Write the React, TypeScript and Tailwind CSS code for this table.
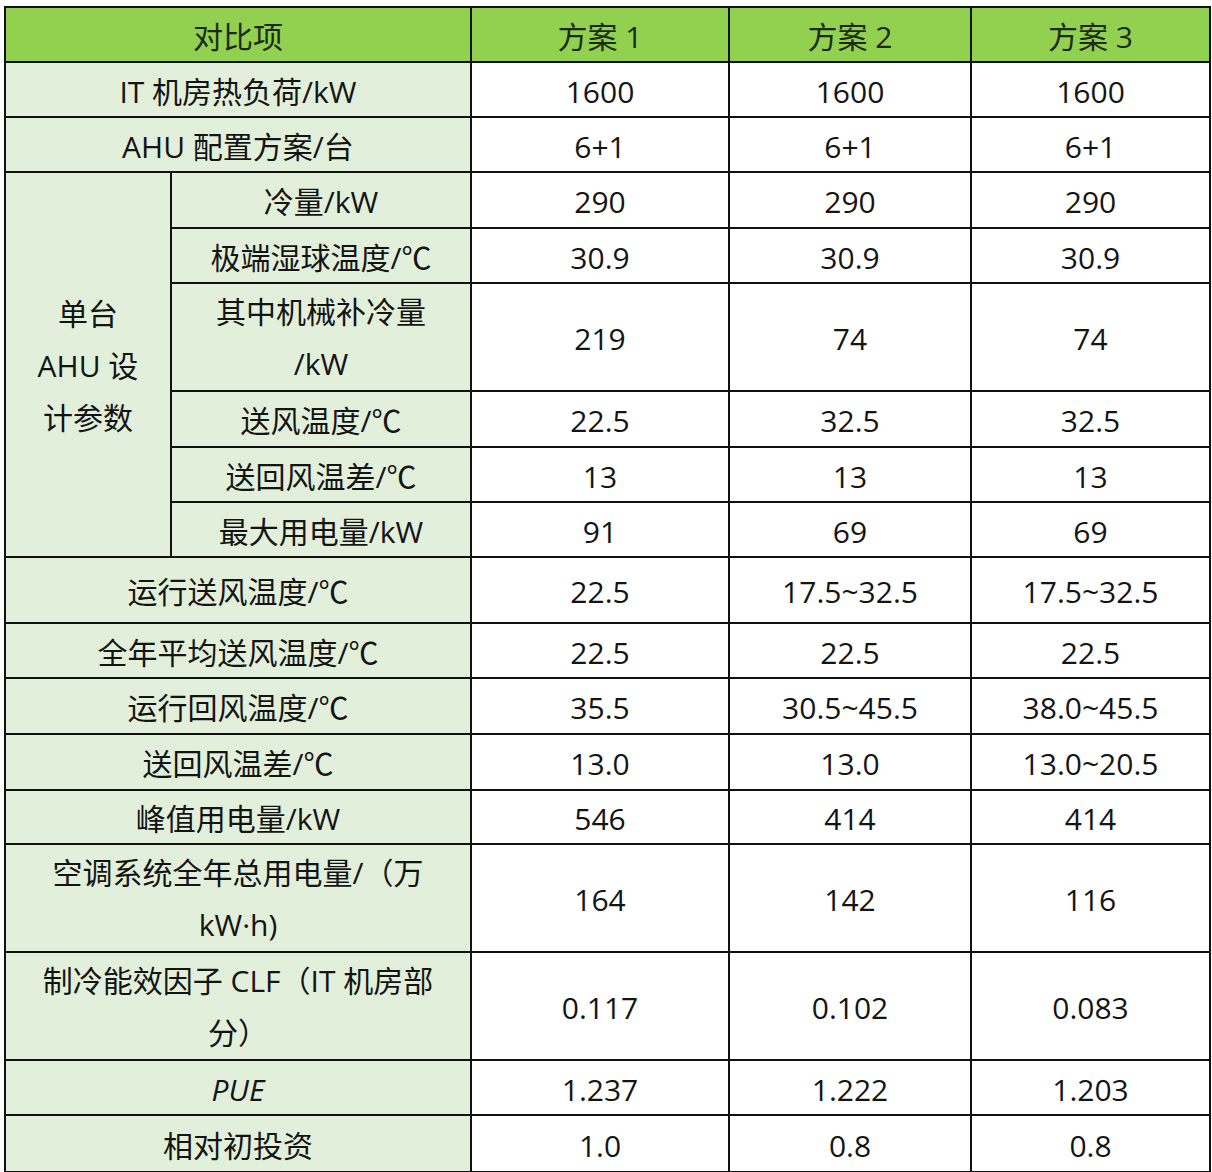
import React from "react";

const font = {
  fontFamily: '"Open Sans", "Noto Sans CJK SC", sans-serif',
};

type Row = {
  label: React.ReactNode;
  values: string[];
  h: string;
  italic?: boolean;
  multi?: boolean;
};

const topRows: Row[] = [
  { label: "IT 机房热负荷/kW", values: ["1600", "1600", "1600"], h: "h-[55px]" },
  { label: "AHU 配置方案/台", values: ["6+1", "6+1", "6+1"], h: "h-[55px]" },
];

const subRows: Row[] = [
  { label: "冷量/kW", values: ["290", "290", "290"], h: "h-[56px]" },
  { label: "极端湿球温度/℃", values: ["30.9", "30.9", "30.9"], h: "h-[55px]" },
  {
    label: (
      <>
        其中机械补冷量
        <br />
        /kW
      </>
    ),
    values: ["219", "74", "74"],
    h: "h-[107px]",
    multi: true,
  },
  { label: "送风温度/℃", values: ["22.5", "32.5", "32.5"], h: "h-[56px]" },
  { label: "送回风温差/℃", values: ["13", "13", "13"], h: "h-[55px]" },
  { label: "最大用电量/kW", values: ["91", "69", "69"], h: "h-[55px]" },
];

const bottomRows: Row[] = [
  { label: "运行送风温度/℃", values: ["22.5", "17.5~32.5", "17.5~32.5"], h: "h-[66px]" },
  { label: "全年平均送风温度/℃", values: ["22.5", "22.5", "22.5"], h: "h-[55px]" },
  { label: "运行回风温度/℃", values: ["35.5", "30.5~45.5", "38.0~45.5"], h: "h-[56px]" },
  { label: "送回风温差/℃", values: ["13.0", "13.0", "13.0~20.5"], h: "h-[56px]" },
  { label: "峰值用电量/kW", values: ["546", "414", "414"], h: "h-[54px]" },
  {
    label: (
      <>
        空调系统全年总用电量/（万
        <br />
        kW·h)
      </>
    ),
    values: ["164", "142", "116"],
    h: "h-[107px]",
    multi: true,
  },
  {
    label: (
      <>
        制冷能效因子 CLF（IT 机房部
        <br />
        分）
      </>
    ),
    values: ["0.117", "0.102", "0.083"],
    h: "h-[108px]",
    multi: true,
  },
  { label: "PUE", values: ["1.237", "1.222", "1.203"], h: "h-[55px]", italic: true },
  { label: "相对初投资", values: ["1.0", "0.8", "0.8"], h: "h-[57px]" },
];

// single-line cells: a 44px line box nudged down a little, like the scan
const cell = "border-2 border-[#111] text-center align-middle px-0 pt-[4px] pb-0 leading-[44px]";
const multiCell = "border-2 border-[#111] text-center align-middle px-0 pt-[2px] pb-0 leading-[52px]";
const green = "bg-[#e2efda]";

function ValueCells({ values }: { values: string[] }) {
  return (
    <>
      {values.map((v, i) => (
        <td key={i} className={`${cell} bg-white`}>
          {v}
        </td>
      ))}
    </>
  );
}

export default function App() {
  return (
    <div className="w-[1212px] h-[1172px] bg-white pt-[6px] pl-[4px]" style={font}>
      <table className="table-fixed border-collapse w-[1205px] text-[30px] text-[#141414]">
        <colgroup>
          <col className="w-[166px]" />
          <col className="w-[300px]" />
          <col className="w-[258px]" />
          <col className="w-[242px]" />
          <col className="w-[239px]" />
        </colgroup>
        <thead>
          <tr className="h-[55px]">
            <th colSpan={2} className={`${cell} bg-[#92d050] font-normal text-[#1c2a12]`}>
              对比项
            </th>
            <th className={`${cell} bg-[#92d050] font-normal text-[#1c2a12]`}>方案 1</th>
            <th className={`${cell} bg-[#92d050] font-normal text-[#1c2a12]`}>方案 2</th>
            <th className={`${cell} bg-[#92d050] font-normal text-[#1c2a12]`}>方案 3</th>
          </tr>
        </thead>
        <tbody>
          {topRows.map((r, i) => (
            <tr key={`t${i}`} className={r.h}>
              <td colSpan={2} className={`${cell} ${green}`}>
                {r.label}
              </td>
              <ValueCells values={r.values} />
            </tr>
          ))}
          {subRows.map((r, i) => (
            <tr key={`s${i}`} className={r.h}>
              {i === 0 && (
                <td rowSpan={subRows.length} className={`${multiCell} ${green}`}>
                  单台
                  <br />
                  AHU 设
                  <br />
                  计参数
                </td>
              )}
              <td className={`${r.multi ? multiCell : cell} ${green}`}>{r.label}</td>
              <ValueCells values={r.values} />
            </tr>
          ))}
          {bottomRows.map((r, i) => (
            <tr key={`b${i}`} className={r.h}>
              <td
                colSpan={2}
                className={`${r.multi ? multiCell : cell} ${green} ${r.italic ? "italic" : ""}`}
              >
                {r.label}
              </td>
              <ValueCells values={r.values} />
            </tr>
          ))}
        </tbody>
      </table>
    </div>
  );
}
